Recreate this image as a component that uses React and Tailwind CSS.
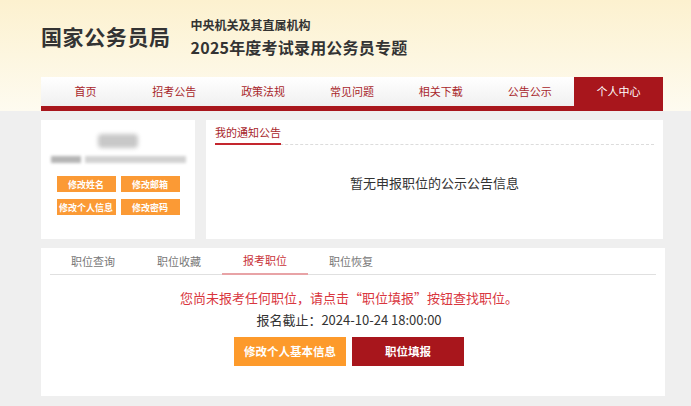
import React from "react";

const navItems = ["首页", "招考公告", "政策法规", "常见问题", "相关下载", "公告公示", "个人中心"];
const tabs = ["职位查询", "职位收藏", "报考职位", "职位恢复"];

export default function App() {
  return (
    <div
      className="w-[691px] h-[406px] overflow-hidden bg-[#efefef]"
      style={{ fontFamily: '"Noto Sans CJK SC", "Noto Sans", sans-serif' }}
    >
      {/* header */}
      <div className="h-[111px] bg-gradient-to-b from-[#fcf1cf] to-[#fefbf0] flex flex-col">
        <div className="h-[77px] flex items-center pl-[41px] pb-[4px]">
          <div className="text-[21px] font-bold text-[#333] leading-none tracking-[0.6px]">国家公务员局</div>
          <div className="ml-[20px] flex flex-col mt-[1px]">
            <div className="text-[12px] font-bold text-[#333] leading-none">中央机关及其直属机构</div>
            <div className="text-[16px] font-bold text-[#333] leading-none mt-[8px] tracking-[0.2px]">2025年度考试录用公务员专题</div>
          </div>
        </div>
        <div className="ml-[41px] w-[622px] flex flex-col">
          <div className="h-[29px] grid grid-cols-7 bg-gradient-to-b from-[#ffffff] to-[#f0f0f0]">
            {navItems.map((n, i) => (
              <div
                key={n}
                className={
                  i === 6
                    ? "flex items-center justify-center text-[11px] text-white bg-[#a8161c]"
                    : "flex items-center justify-center text-[11px] text-[#a8262b]"
                }
              >
                {n}
              </div>
            ))}
          </div>
          <div className="h-[5px] bg-[#a8161c]" />
        </div>
      </div>

      {/* middle row */}
      <div className="ml-[41px] w-[622px] mt-[9px] flex gap-[11px] h-[119px]">
        <div className="w-[154px] bg-white flex flex-col items-center">
          <div className="mt-[14px] w-[40px] h-[14px] bg-[#c8c8c8] blur-[2px] rounded-sm" />
          <div className="mt-[8px] w-[135px] h-[7px] flex gap-[4px]">
            <div className="w-[30px] h-full bg-[#b5b5b5] blur-[1.5px]" />
            <div className="flex-1 h-full bg-[#d2d2d2] blur-[1.5px]" />
          </div>
          <div className="mt-[13px] grid grid-cols-2 gap-x-[5px] gap-y-[7px]">
            {["修改姓名", "修改邮箱", "修改个人信息", "修改密码"].map((t) => (
              <div
                key={t}
                className="w-[59px] h-[16px] bg-[#fb9a35] text-white text-[9px] flex items-center justify-center leading-none font-bold"
              >
                {t}
              </div>
            ))}
          </div>
        </div>
        <div className="flex-1 bg-white px-[9px] pt-[7px] flex flex-col">
          <div className="flex items-end border-b border-dashed border-[#dcdcdc]">
            <div className="text-[11px] text-[#a8262b] leading-none pb-[5px] border-b-2 border-[#c4262e] -mb-[1px]">
              我的通知公告
            </div>
          </div>
          <div className="flex-1 flex items-start justify-center pt-[28px] text-[13px] text-[#333]">
            暂无申报职位的公示公告信息
          </div>
        </div>
      </div>

      {/* bottom card */}
      <div className="ml-[41px] w-[624px] mt-[9px] h-[148px] bg-white px-[9px] flex flex-col">
        <div className="flex border-b border-[#e0e0e0] h-[27px]">
          {tabs.map((t, i) => (
            <div
              key={t}
              className={
                i === 2
                  ? "w-[86px] flex items-center justify-center text-[11px] text-[#c9343b] border-b-2 border-[#e8a3a6] -mb-[1px]"
                  : "w-[86px] flex items-center justify-center text-[11px] text-[#777]"
              }
            >
              {t}
            </div>
          ))}
        </div>
        <div className="flex flex-col items-center pr-[8px]">
          <div className="mt-[16px] text-[13px] text-[#d9363e] leading-none">
            您尚未报考任何职位，请点击“职位填报”按钮查找职位。
          </div>
          <div className="mt-[9px] text-[13px] text-[#333] leading-none">报名截止：2024-10-24 18:00:00</div>
          <div className="mt-[11px] flex gap-[6px]">
            <div className="w-[112px] h-[29px] bg-[#fd9a2b] text-white text-[11.5px] font-bold flex items-center justify-center">
              修改个人基本信息
            </div>
            <div className="w-[112px] h-[29px] bg-[#a8161c] text-white text-[11.5px] font-bold flex items-center justify-center">
              职位填报
            </div>
          </div>
        </div>
      </div>
    </div>
  );
}
